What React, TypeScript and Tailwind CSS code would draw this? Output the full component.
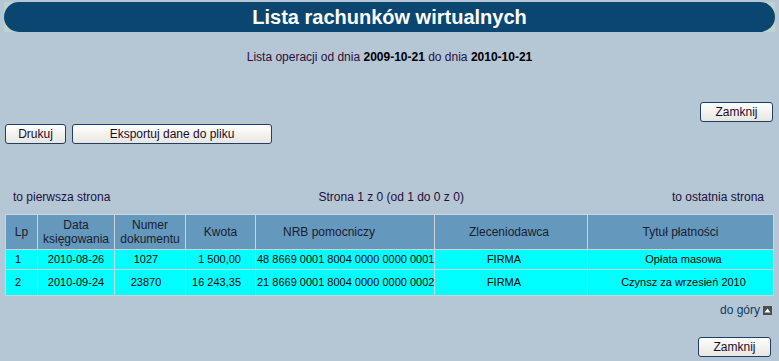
import React from 'react'

interface Operation {
  lp: number
  date: string
  doc: string
  amount: string
  nrb: string
  payer: string
  title: string
}

const operations: Operation[] = [
  {
    lp: 1,
    date: '2010-08-26',
    doc: '1027',
    amount: '1 500,00',
    nrb: '48 8669 0001 8004 0000 0000 0001',
    payer: 'FIRMA',
    title: 'Opłata masowa',
  },
  {
    lp: 2,
    date: '2010-09-24',
    doc: '23870',
    amount: '16 243,35',
    nrb: '21 8669 0001 8004 0000 0000 0002',
    payer: 'FIRMA',
    title: 'Czynsz za wrzesień 2010',
  },
]

function Button({ children, className = '' }: { children: string; className?: string }): JSX.Element {
  return (
    <button
      type="button"
      className={`h-[20px] rounded-[3px] border border-[#1f3f68] bg-gradient-to-b from-white to-[#e8e6df] text-[12px] leading-none text-[#1b0b2b] ${className}`}
    >
      {children}
    </button>
  )
}

function Header(): JSX.Element {
  return (
    <div className="mx-[4px] mt-[2px] h-[30px] bg-[#bcd4cd]">
      <div className="flex h-full items-center justify-center rounded-[15px] bg-[#0b4670]">
        <h1 className="text-[20px] font-bold leading-none text-white">Lista rachunków wirtualnych</h1>
      </div>
    </div>
  )
}

function OperationsTable(): JSX.Element {
  const th = 'border border-[#c9d4dc] bg-[#6598bd] text-center align-middle text-[12px] font-normal leading-[14px] text-[#18202e]'
  const td = 'border border-[#c9d4dc] bg-[#00ffff] align-middle text-[11px] leading-[13px] text-black'
  return (
    <table className="ml-[5px] w-[768px] table-fixed border-collapse">
      <colgroup>
        <col className="w-[32px]" />
        <col className="w-[77px]" />
        <col className="w-[71px]" />
        <col className="w-[70px]" />
        <col className="w-[179px]" />
        <col className="w-[153px]" />
        <col className="w-[186px]" />
      </colgroup>
      <thead>
        <tr className="h-[35px]">
          <th className={th}>Lp</th>
          <th className={th}>
            Data
            <br />
            księgowania
          </th>
          <th className={th}>
            Numer
            <br />
            dokumentu
          </th>
          <th className={th}>Kwota</th>
          <th className={`${th} pr-[32px]`}>NRB pomocniczy</th>
          <th className={`${th} pr-[4px]`}>Zleceniodawca</th>
          <th className={th}>Tytuł płatności</th>
        </tr>
      </thead>
      <tbody>
        {operations.map((op, i) => (
          <tr key={op.lp} className={i === 0 ? 'h-[20px]' : 'h-[26px]'}>
            <td className={`${td} pl-[9px] text-left`}>{op.lp}</td>
            <td className={`${td} text-center`}>{op.date}</td>
            <td className={`${td} pr-[8px] text-center`}>{op.doc}</td>
            <td className={`${td} pr-[14px] text-right`}>{op.amount}</td>
            <td className={`${td} whitespace-nowrap pl-[1px] text-left`}>{op.nrb}</td>
            <td className={`${td} pr-[14px] text-center`}>{op.payer}</td>
            <td className={`${td} pl-[6px] text-center`}>{op.title}</td>
          </tr>
        ))}
      </tbody>
    </table>
  )
}

function UpArrow(): JSX.Element {
  return (
    <svg width="9" height="9" viewBox="0 0 9 9" className="ml-[3px]">
      <rect x="0" y="0" width="9" height="9" fill="#4d4d4d" />
      <path d="M1.5 6.5 L4.5 2.5 L7.5 6.5 Z" fill="#ffffff" />
    </svg>
  )
}

export default function App(): JSX.Element {
  return (
    <div className="h-[361px] w-[779px] overflow-hidden bg-[#b5c6d4] font-['Liberation_Sans',Arial,sans-serif]">
      <Header />
      <p className="mt-[18px] text-center text-[12px] leading-[14px] text-[#2a1040]">
        Lista operacji od dnia <b className="text-black">2009-10-21</b> do dnia{' '}
        <b className="text-black">2010-10-21</b>
      </p>
      <div className="mt-[38px] flex justify-end pr-[6px]">
        <Button className="w-[73px]">Zamknij</Button>
      </div>
      <div className="mt-[2px] flex gap-[6px] pl-[5px]">
        <Button className="w-[61px]">Drukuj</Button>
        <Button className="w-[200px]">Eksportuj dane do pliku</Button>
      </div>
      <div className="mt-[46px] flex items-center justify-between pl-[13px] pr-[15px] text-[12px] leading-[14px] text-[#201040]">
        <span>to pierwsza strona</span>
        <span>Strona 1 z 0 (od 1 do 0 z 0)</span>
        <span>to ostatnia strona</span>
      </div>
      <div className="mt-[10px]">
        <OperationsTable />
      </div>
      <div className="mt-[7px] flex items-center justify-end pr-[7px] text-[12px] leading-[14px] text-[#0f3a5f]">
        <span>do góry</span>
        <UpArrow />
      </div>
      <div className="mt-[20px] flex justify-end pr-[8px]">
        <Button className="w-[73px]">Zamknij</Button>
      </div>
    </div>
  )
}
